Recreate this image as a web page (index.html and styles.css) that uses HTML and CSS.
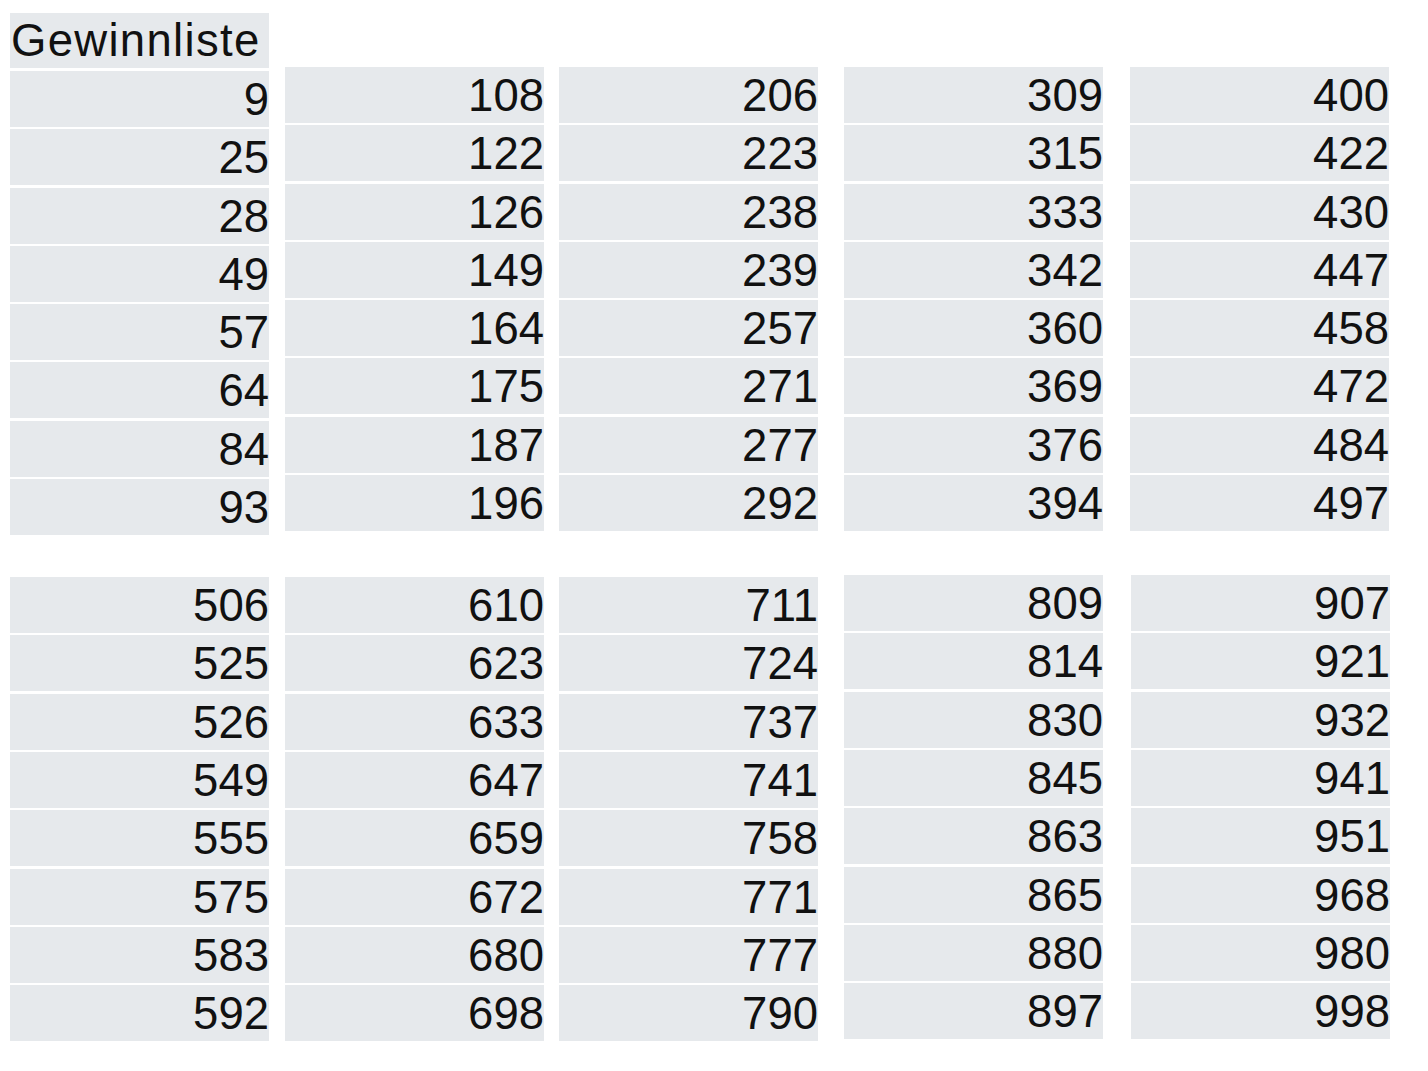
FILE: index.html
```html
<!DOCTYPE html>
<html lang="de">
<head>
<meta charset="utf-8">
<title>Gewinnliste</title>
<link rel="stylesheet" href="styles.css">
</head>
<body>
<div class="sheet">
  <div class="block block-top">
    <div class="col col-1">
      <div class="cell head">Gewinnliste</div>
      <div class="list">
        <div class="cell">9</div><div class="cell">25</div><div class="cell">28</div><div class="cell">49</div>
        <div class="cell">57</div><div class="cell">64</div><div class="cell">84</div><div class="cell">93</div>
      </div>
    </div>
    <div class="col col-2 shift">
      <div class="list">
        <div class="cell">108</div><div class="cell">122</div><div class="cell">126</div><div class="cell">149</div>
        <div class="cell">164</div><div class="cell">175</div><div class="cell">187</div><div class="cell">196</div>
      </div>
    </div>
    <div class="col col-3 shift">
      <div class="list">
        <div class="cell">206</div><div class="cell">223</div><div class="cell">238</div><div class="cell">239</div>
        <div class="cell">257</div><div class="cell">271</div><div class="cell">277</div><div class="cell">292</div>
      </div>
    </div>
    <div class="col col-4 shift">
      <div class="list">
        <div class="cell">309</div><div class="cell">315</div><div class="cell">333</div><div class="cell">342</div>
        <div class="cell">360</div><div class="cell">369</div><div class="cell">376</div><div class="cell">394</div>
      </div>
    </div>
    <div class="col col-5 shift">
      <div class="list">
        <div class="cell">400</div><div class="cell">422</div><div class="cell">430</div><div class="cell">447</div>
        <div class="cell">458</div><div class="cell">472</div><div class="cell">484</div><div class="cell">497</div>
      </div>
    </div>
  </div>
  <div class="block block-bottom">
    <div class="col col-1 low">
      <div class="list">
        <div class="cell">506</div><div class="cell">525</div><div class="cell">526</div><div class="cell">549</div>
        <div class="cell">555</div><div class="cell">575</div><div class="cell">583</div><div class="cell">592</div>
      </div>
    </div>
    <div class="col col-2 low">
      <div class="list">
        <div class="cell">610</div><div class="cell">623</div><div class="cell">633</div><div class="cell">647</div>
        <div class="cell">659</div><div class="cell">672</div><div class="cell">680</div><div class="cell">698</div>
      </div>
    </div>
    <div class="col col-3 low">
      <div class="list">
        <div class="cell">711</div><div class="cell">724</div><div class="cell">737</div><div class="cell">741</div>
        <div class="cell">758</div><div class="cell">771</div><div class="cell">777</div><div class="cell">790</div>
      </div>
    </div>
    <div class="col col-4">
      <div class="list">
        <div class="cell">809</div><div class="cell">814</div><div class="cell">830</div><div class="cell">845</div>
        <div class="cell">863</div><div class="cell">865</div><div class="cell">880</div><div class="cell">897</div>
      </div>
    </div>
    <div class="col col-5 wide">
      <div class="list">
        <div class="cell">907</div><div class="cell">921</div><div class="cell">932</div><div class="cell">941</div>
        <div class="cell">951</div><div class="cell">968</div><div class="cell">980</div><div class="cell">998</div>
      </div>
    </div>
  </div>
</div>
</body>
</html>
```

FILE: styles.css
```css
html, body {
  margin: 0;
  padding: 0;
  background: #ffffff;
}

body {
  font-family: "Liberation Sans", Arial, sans-serif;
  color: #111111;
}

.sheet {
  padding: 13px 0 0 10px;
}

.block {
  display: flex;
  align-items: flex-start;
}

.block-bottom {
  margin-top: 40px;
}

.col {
  width: 259px;
  flex: none;
  display: flex;
  flex-direction: column;
}

.col-2 { margin-left: 16px; }
.col-3 { margin-left: 15px; }
.col-4 { margin-left: 26px; }
.col-5 { margin-left: 27px; }
.col-5.wide { margin-left: 28px; }

.shift {
  margin-top: 54px;
}

.low {
  margin-top: 2px;
}

.list {
  display: flex;
  flex-direction: column;
  gap: 2.3px;
}

.col-1 .head + .list {
  margin-top: 3px;
}

.cell {
  height: 56px;
  line-height: 57px;
  background: #e6e9ec;
  font-size: 45.5px;
  text-align: right;
  padding: 0;
  white-space: nowrap;
  overflow: hidden;
}

.cell.head {
  height: 55px;
  line-height: 56px;
  text-align: left;
  padding: 0 0 0 1px;
  letter-spacing: 1.3px;
}
```
